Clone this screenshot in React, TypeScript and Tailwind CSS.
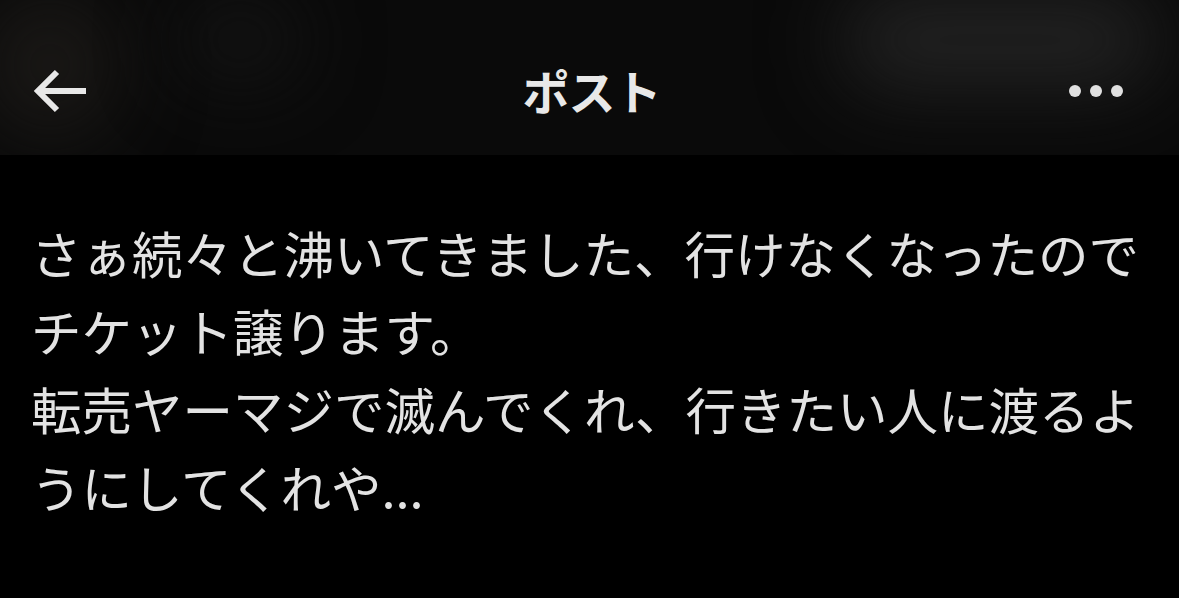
import * as React from 'react';

const lines = [
  'さぁ続々と沸いてきました、行けなくなったので',
  'チケット譲ります。',
  '転売ヤーマジで滅んでくれ、行きたい人に渡るよ',
  'うにしてくれや...',
];

const BackArrow = () => (
  <svg width="56" height="46" viewBox="0 0 56 46" fill="none">
    <path d="M53 23H6" stroke="#e8e8e8" strokeWidth="6" />
    <path d="M24 4L5 23l19 19" stroke="#e8e8e8" strokeWidth="6" strokeLinejoin="miter" />
  </svg>
);

export default function App() {
  return (
    <div
      className="w-[1179px] h-[598px] bg-black overflow-hidden"
      style={{ fontFamily: '"Noto Sans CJK JP", "Noto Sans", sans-serif' }}
    >
      <header className="relative h-[155px] bg-[#0a0a0a] overflow-hidden">
        {/* blurred background behind the bar */}
        <div className="absolute left-[-20px] top-[-10px] w-[140px] h-[150px] rounded-full bg-[#1a1816] blur-2xl" />
        <div className="absolute left-[840px] top-[-10px] w-[320px] h-[100px] rounded-full bg-[#222222] blur-2xl" />
        <div className="absolute left-[180px] top-[0px] w-[120px] h-[80px] rounded-full bg-[#141414] blur-2xl" />
        <div className="relative flex items-center justify-between h-full pl-[33px] pr-[34px] pt-[26px]">
          <BackArrow />
          <div className="absolute left-0 right-0 top-[26px] bottom-0 flex items-center justify-center pointer-events-none">
            <span className="text-[47px] font-bold text-[#e8e8e8] tracking-[-1px] pl-[4px]">ポスト</span>
          </div>
          <div className="flex items-center gap-[9px] pr-[22px]">
            <span className="w-[12px] h-[12px] rounded-full bg-[#e0e0e0]" />
            <span className="w-[12px] h-[12px] rounded-full bg-[#e0e0e0]" />
            <span className="w-[12px] h-[12px] rounded-full bg-[#e0e0e0]" />
          </div>
        </div>
      </header>
      <main className="pl-[31px] pt-[58px]">
        <div className="text-[50.5px] leading-[78px] text-[#e3e3e3]">
          {lines.map((line) => (
            <div key={line} className="whitespace-nowrap">
              {line}
            </div>
          ))}
        </div>
      </main>
    </div>
  );
}
